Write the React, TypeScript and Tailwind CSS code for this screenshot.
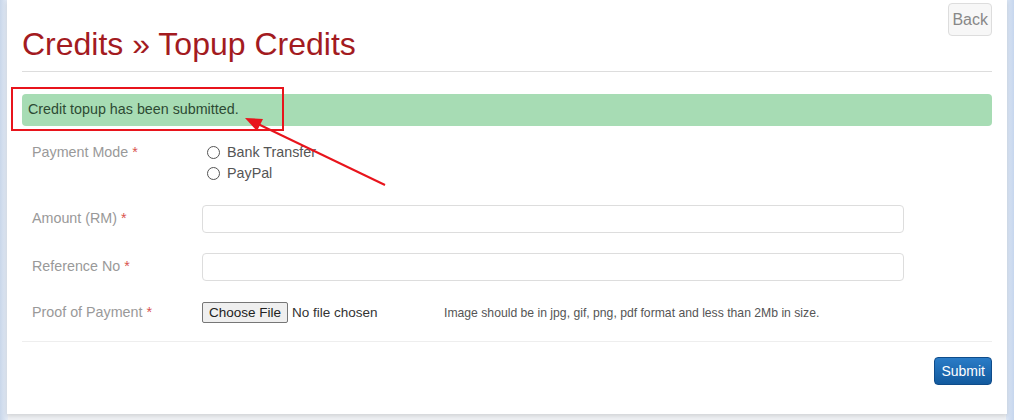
import React from "react";

const Label = ({ text }: { text: string }) => (
  <div className="w-[180px] shrink-0 pl-[10px] text-[14.3px] text-[#999]">
    {text} <span className="text-[#d9534f]">*</span>
  </div>
);

const Radio = ({ label }: { label: string }) => (
  <label className="flex items-center gap-[7px] h-[21px] text-[14.3px] text-[#555]">
    <span className="w-[13px] h-[13px] rounded-full border border-[#555] bg-white" />
    {label}
  </label>
);

export default function App() {
  return (
    <div
      className="relative w-[1014px] h-[420px] overflow-hidden bg-[#eef0f3] text-[#333]"
      style={{ fontFamily: '"Liberation Sans", Arial, sans-serif' }}
    >
      <div className="absolute inset-y-0 left-0 w-[8px] bg-gradient-to-r from-[#c9d7ea] to-[#e6ecf5]" />
      <div className="absolute inset-y-0 right-0 w-[8px] bg-gradient-to-r from-[#dde7f4] to-[#c6d6ee]" />

      <div className="relative mx-[7px] h-[414px] bg-white shadow-[0_2px_4px_rgba(0,0,0,0.12)] px-[15px]">
        <div className="flex justify-end pt-[3px]">
          <button className="h-[33px] px-[3px] rounded-[4px] border border-[#ddd] bg-[#f7f7f7] text-[16px] text-[#888]">
            Back
          </button>
        </div>
        <h1 className="-mt-[9px] text-[32px] leading-[34px] text-[#a31b1f]">Credits » Topup Credits</h1>
        <div className="mt-[10px] border-t border-[#ddd]" />

        <div className="mt-[22px] h-[32px] rounded-[4px] bg-[#a7dcb4] px-[6px] flex items-center text-[14.3px] text-[#2d4a33]">
          Credit topup has been submitted.
        </div>

        <div className="mt-[16px] flex">
          <Label text="Payment Mode" />
          <div className="pl-[5px]">
            <Radio label="Bank Transfer" />
            <Radio label="PayPal" />
          </div>
        </div>

        <div className="mt-[21px] flex items-center">
          <Label text="Amount (RM)" />
          <div className="w-[702px] h-[28px] rounded-[4px] border border-[#ddd] bg-white" />
        </div>

        <div className="mt-[20px] flex items-center">
          <Label text="Reference No" />
          <div className="w-[702px] h-[28px] rounded-[4px] border border-[#ddd] bg-white" />
        </div>

        <div className="mt-[21px] flex items-center">
          <Label text="Proof of Payment" />
          <button className="h-[21px] w-[86px] border border-[#767676] bg-[#efefef] text-[13.5px] text-[#222] rounded-[2px]">
            Choose File
          </button>
          <span className="ml-[4px] w-[152px] text-[13.5px] text-[#333]">No file chosen</span>
          <span className="text-[12.2px] text-[#555]">
            Image should be in jpg, gif, png, pdf format and less than 2Mb in size.
          </span>
        </div>

        <div className="mt-[18px] border-t border-[#eee]" />

        <div className="mt-[15px] flex justify-end">
          <button className="h-[28px] px-[6px] rounded-[4px] border border-[#0f4c8a] bg-gradient-to-b from-[#2a7cc7] to-[#125a9e] text-[14px] text-white">
            Submit
          </button>
        </div>
      </div>

      <svg className="absolute left-0 top-0 pointer-events-none" width="1014" height="420">
        <rect x="12" y="88" width="271" height="42" fill="none" stroke="#e8141c" strokeWidth="2" />
        <line x1="385" y1="185" x2="258" y2="124" stroke="#e8141c" strokeWidth="2" />
        <polygon points="245,118 263,119 257,131" fill="#e8141c" />
      </svg>
    </div>
  );
}
